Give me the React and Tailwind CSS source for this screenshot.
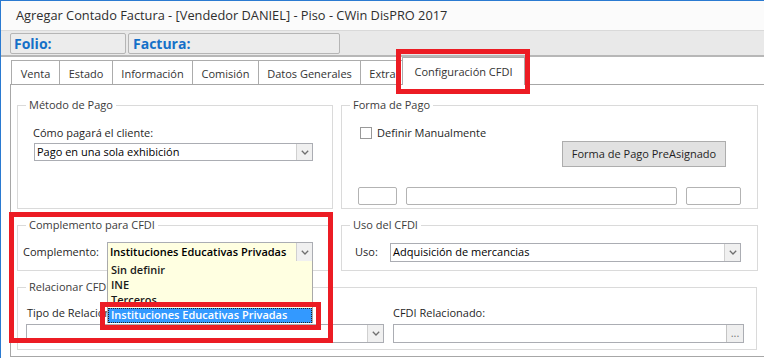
import { useState } from "react";

const tabs = [
  { label: "Venta", w: "w-[48px]" },
  { label: "Estado", w: "w-[53px]" },
  { label: "Información", w: "w-[80px]" },
  { label: "Comisión", w: "w-[66px]" },
  { label: "Datos Generales", w: "w-[102px]" },
  { label: "Extra", w: "w-[44px]" },
];

const opciones = ["Sin definir", "INE", "Terceros", "Instituciones Educativas Privadas"];

// flechita de los combos
const Chevron = () => (
  <svg width="8" height="5" viewBox="0 0 8 5">
    <polyline points="0.8,0.8 4,4 7.2,0.8" fill="none" stroke="#6f6f6f" strokeWidth="1.3" />
  </svg>
);

const Group = ({ title, className, children }) => (
  <div className={`relative border border-[#dadada] ${className}`}>
    <span className="absolute left-[8px] -top-[8px] bg-white px-[3px] leading-[14px] text-[#3c3c3c]">
      {title}
    </span>
    {children}
  </div>
);

const Combo = ({ value, className, yellow, bold, children }) => (
  <div
    className={`relative flex border border-[#abadb3] ${yellow ? "bg-[#ffffe1]" : "bg-white"} ${className}`}
  >
    <div className={`flex-1 flex items-center pl-[2px] text-black ${bold ? "font-semibold" : ""}`}>{value}</div>
    <div className="w-[16px] flex items-center justify-center border-l border-[#d0d0d0] bg-[#f0f0f0]">
      <Chevron />
    </div>
    {children}
  </div>
);

const TextBox = ({ className }) => (
  <div className={`h-[18px] border border-[#b3b3b3] rounded-[2px] bg-white ${className}`} />
);

export default function App() {
  const [tab] = useState("Configuración CFDI");

  return (
    <div className="relative w-[764px] h-[358px] overflow-hidden bg-white border-l border-t border-[#2a7ad1] font-['Open_Sans',sans-serif] text-[11px] text-[#1f1f1f]">
      {/* barra de titulo */}
      <div className="h-[30px] bg-[#fbfbfb] border-b border-[#d9d9d9] flex items-center pl-[15px] text-[12.8px] text-[#2e2e2e]">
        Agregar Contado Factura - [Vendedor DANIEL] - Piso - CWin DisPRO 2017
      </div>

      {/* folio / factura */}
      <div className="h-[26px] bg-[#e9e9e9] border-b-2 border-[#b7b7b7] flex pl-[9px] pt-[2px] gap-[2px]">
        <div className="w-[116px] h-[21px] border border-[#b5b5b5] rounded-[2px] bg-[#ececec] flex items-center pl-[3px] text-[14px] font-bold text-[#1570c8]">
          Folio:
        </div>
        <div className="w-[212px] h-[21px] border border-[#b5b5b5] rounded-[2px] bg-[#ececec] flex items-center pl-[4px] text-[14px] font-bold text-[#1570c8]">
          Factura:
        </div>
      </div>

      <div className="pl-[9px]">
        {/* pestañas */}
        <div className="h-[27px] flex items-end pl-[1px]">
          {tabs.map((t) => (
            <div
              key={t.label}
              className={`${t.w} h-[24px] pt-[3px] border-l border-t border-[#acacac] flex items-center justify-center text-[#333]`}
            >
              {t.label}
            </div>
          ))}
          <div className="relative z-10 -ml-[2px] -mb-[1px] w-[123px] h-[28px] pt-[2px] bg-white border-l border-t border-r border-[#acacac] flex items-center justify-center text-[#333]">
            {tab}
          </div>
        </div>

        {/* panel */}
        <div className="h-[273px] border-l border-t border-b border-[#a7a7a7] pl-[6px] pt-[20px]">
          <div className="flex gap-[8px]">
            <Group title="Método de Pago" className="w-[316px] h-[104px] pl-[16px] pt-[20px]">
              <div className="leading-[14px] -ml-[1px]">Cómo pagará el cliente:</div>
              <Combo value="Pago en una sola exhibición" className="mt-[3px] w-[279px] h-[18px]" />
            </Group>

            <Group title="Forma de Pago" className="w-[417px] h-[104px] pt-[21px]">
              <div className="flex items-center pl-[18px]">
                <div className="w-[12px] h-[12px] border border-[#999] bg-white" />
                <span className="ml-[5px] leading-[12px]">Definir Manualmente</span>
              </div>
              <div className="mt-[2px] ml-[220px] w-[164px] h-[26px] border border-[#adadad] bg-[#e1e1e1] flex items-center justify-center">
                Forma de Pago PreAsignado
              </div>
              <div className="mt-[20px] flex gap-[9px] pl-[16px]">
                <TextBox className="w-[39px]" />
                <TextBox className="w-[271px]" />
                <TextBox className="w-[55px]" />
              </div>
            </Group>
          </div>

          <div className="mt-[16px] flex gap-[8px]">
            <Group title="Complemento para CFDI" className="relative z-20 w-[316px] h-[46px] pl-[5px] pt-[16px]">
              <div className="flex items-center">
                <span className="w-[84px]">Complemento:</span>
                <Combo value="Instituciones Educativas Privadas" className="w-[206px] h-[20px]" yellow bold>
                  {/* lista desplegada */}
                  <div className="absolute left-[-1px] top-full w-[206px] pt-[2px] bg-[#ffffe1] border-l border-r border-[#a9a9a9] font-semibold">
                    {opciones.map((o, i) =>
                      i === opciones.length - 1 ? (
                        <div
                          key={o}
                          className="h-[15px] flex items-center pl-[2px] bg-[#3399ff] text-white border border-dotted border-[#222]"
                        >
                          {o}
                        </div>
                      ) : (
                        <div key={o} className="h-[15px] flex items-center pl-[3px] text-[#1a1a1a]">
                          {o}
                        </div>
                      )
                    )}
                  </div>
                </Combo>
              </div>
            </Group>

            <Group title="Uso del CFDI" className="w-[417px] h-[46px] pl-[13px] pt-[17px]">
              <div className="flex items-center">
                <span className="w-[35px]">Uso:</span>
                <Combo value="Adquisición de mercancias" className="w-[351px] h-[19px]" />
              </div>
            </Group>
          </div>

          <Group title="Relacionar CFDI" className="mt-[16px] w-[740px] h-[63px] pl-[8px] pt-[18px]">
            <div className="flex gap-[9px]">
              <div className="w-[358px]">
                <div className="leading-[14px] pl-[1px]">Tipo de Relación:</div>
                <Combo value="" className="mt-[4px] h-[19px]" />
              </div>
              <div className="w-[351px]">
                <div className="leading-[14px]">CFDI Relacionado:</div>
                <div className="mt-[4px] h-[19px] flex border border-[#abadb3]">
                  <div className="flex-1" />
                  <div className="w-[17px] border-l border-[#c4c4c4] bg-[#efefef] flex items-center justify-center text-[#777] leading-none pb-[3px]">
                    ...
                  </div>
                </div>
              </div>
            </div>
          </Group>
        </div>
      </div>

      {/* marcas rojas */}
      <div className="absolute z-30 left-[395px] top-[48px] w-[134px] h-[45px] border-[5px] border-[#ec1c24]" />
      <div className="absolute z-30 left-[8px] top-[211px] w-[324px] h-[131px] border-[5px] border-[#ec1c24]" />
      <div className="absolute z-30 left-[99px] top-[301px] w-[221px] h-[28px] border-[5px] border-[#ec1c24]" />
    </div>
  );
}
